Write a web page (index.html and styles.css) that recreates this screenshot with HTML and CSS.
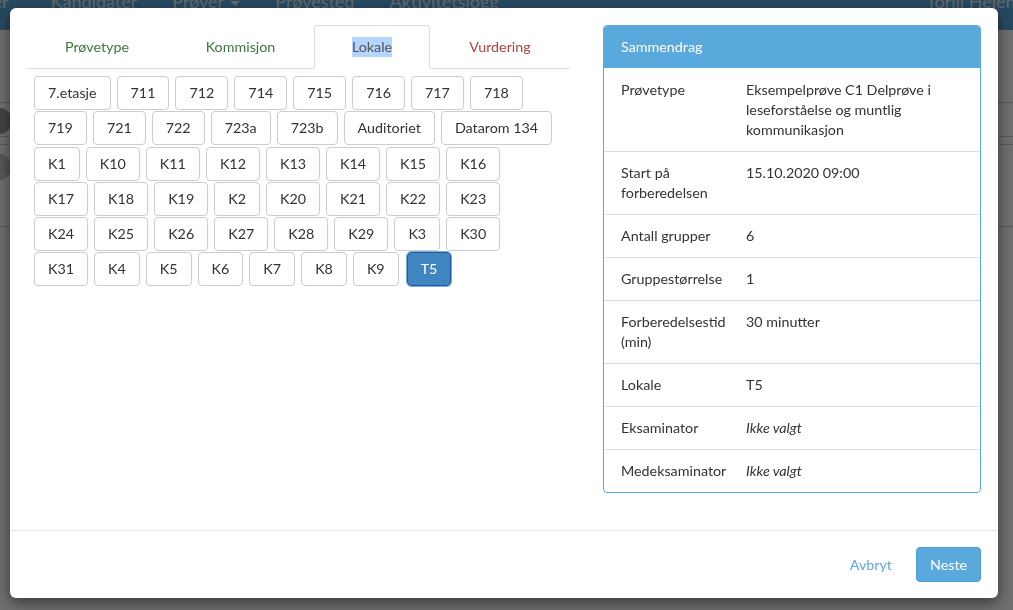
FILE: index.html
```html
<!DOCTYPE html>
<html lang="no">
<head>
<meta charset="utf-8">
<title>Ny prøve</title>
<link rel="stylesheet" href="styles.css">
</head>
<body>
<div class="page">
  <nav class="topnav">
    <span class="brand">Prøvesystemer</span>
    <span class="nav-item">Kandidater</span>
    <span class="nav-item">Prøver <span class="caret"></span></span>
    <span class="nav-item">Prøvested</span>
    <span class="nav-item">Aktivitetslogg</span>
    <span class="nav-user">Torill Helene</span>
  </nav>
  <div class="toolbar"><span class="avatar"></span></div>
  <div class="band band-a"></div>
  <div class="band band-b"><span class="badge">0</span></div>
  <div class="band band-c"></div>
</div>

<div class="backdrop"></div>

<div class="modal">
  <div class="modal-body">
    <div class="left-col">
      <div class="tabs">
        <div class="tab tab-done">Prøvetype</div>
        <div class="tab tab-done">Kommisjon</div>
        <div class="tab tab-active"><span class="selected-text">Lokale</span></div>
        <div class="tab tab-error">Vurdering</div>
      </div>
      <div class="rooms">
        <div class="room-row">
          <button class="room">7.etasje</button><button class="room">711</button><button class="room">712</button><button class="room">714</button><button class="room">715</button><button class="room">716</button><button class="room">717</button><button class="room">718</button>
        </div>
        <div class="room-row">
          <button class="room">719</button><button class="room">721</button><button class="room">722</button><button class="room">723a</button><button class="room">723b</button><button class="room">Auditoriet</button><button class="room">Datarom 134</button>
        </div>
        <div class="room-row">
          <button class="room">K1</button><button class="room">K10</button><button class="room">K11</button><button class="room">K12</button><button class="room">K13</button><button class="room">K14</button><button class="room">K15</button><button class="room">K16</button>
        </div>
        <div class="room-row">
          <button class="room">K17</button><button class="room">K18</button><button class="room">K19</button><button class="room">K2</button><button class="room">K20</button><button class="room">K21</button><button class="room">K22</button><button class="room">K23</button>
        </div>
        <div class="room-row">
          <button class="room">K24</button><button class="room">K25</button><button class="room">K26</button><button class="room">K27</button><button class="room">K28</button><button class="room">K29</button><button class="room">K3</button><button class="room">K30</button>
        </div>
        <div class="room-row">
          <button class="room">K31</button><button class="room">K4</button><button class="room">K5</button><button class="room">K6</button><button class="room">K7</button><button class="room">K8</button><button class="room">K9</button><button class="room room-selected">T5</button>
        </div>
      </div>
    </div>

    <div class="summary">
      <div class="summary-head">Sammendrag</div>
      <div class="summary-row first"><div class="label">Prøvetype</div><div class="value">Eksempelprøve C1 Delprøve i leseforståelse og muntlig kommunikasjon</div></div>
      <div class="summary-row"><div class="label">Start på forberedelsen</div><div class="value">15.10.2020 09:00</div></div>
      <div class="summary-row"><div class="label">Antall grupper</div><div class="value">6</div></div>
      <div class="summary-row"><div class="label">Gruppestørrelse</div><div class="value">1</div></div>
      <div class="summary-row"><div class="label">Forberedelsestid (min)</div><div class="value">30 minutter</div></div>
      <div class="summary-row"><div class="label">Lokale</div><div class="value">T5</div></div>
      <div class="summary-row"><div class="label">Eksaminator</div><div class="value empty">Ikke valgt</div></div>
      <div class="summary-row"><div class="label">Medeksaminator</div><div class="value empty">Ikke valgt</div></div>
    </div>
  </div>
  <div class="modal-footer">
    <button class="btn-link">Avbryt</button>
    <button class="btn-primary">Neste</button>
  </div>
</div>
</body>
</html>
```

FILE: styles.css
```css
* { box-sizing: border-box; }
html, body {
  margin: 0;
  padding: 0;
  width: 1013px;
  height: 610px;
  overflow: hidden;
}
body {
  font-family: Lato, "Open Sans", "Liberation Sans", sans-serif;
  font-size: 14.3px;
  line-height: 20px;
  color: #333;
  background: #fff;
}

/* Page behind the dialog */
.page { width: 1013px; height: 610px; }
.topnav {
  height: 30px;
  background: #5aa9dc;
  display: flex;
  align-items: flex-start;
  overflow: hidden;
  font-size: 18px;
  line-height: 24px;
  color: #e4eef6;
}
.topnav > span { margin-top: -11px; white-space: nowrap; }
.brand { margin-left: -108px; margin-right: 42px; }
.nav-item { margin-right: 35px; }
.caret {
  display: inline-block;
  width: 0; height: 0;
  border-left: 5px solid transparent;
  border-right: 5px solid transparent;
  border-top: 5px solid #e4eef6;
  vertical-align: middle;
  margin-left: 2px;
}
.nav-user { margin-left: auto; margin-right: -12px; }
.toolbar {
  height: 73px;
  border-bottom: 1px solid #cfcfcf;
  position: relative;
}
.avatar {
  position: absolute;
  left: -14px; top: 78px;
  width: 26px; height: 26px;
  border-radius: 50%;
  background: #999;
}
.band { border-bottom: 1px solid #cfcfcf; position: relative; }
.band-a { height: 34px; }
.band-b { height: 8px; }
.band-c { height: 82px; }
.badge {
  position: absolute;
  left: -14px; top: 17px;
  width: 26px; height: 26px;
  border-radius: 50%;
  background: #c8c8c8;
  color: #aaa;
  font-size: 13px;
  text-align: right;
  line-height: 26px;
}

.backdrop {
  position: fixed;
  inset: 0;
  background: rgba(0, 0, 0, 0.56);
}

/* Dialog */
.modal {
  position: absolute;
  left: 10px;
  top: 8px;
  width: 988px;
  height: 590px;
  background: #fff;
  border-radius: 6px;
  box-shadow: 0 5px 15px rgba(0, 0, 0, 0.5);
  display: flex;
  flex-direction: column;
}
.modal-body {
  height: 522px;
  padding: 17px 17px 0 17px;
  display: flex;
  gap: 33px;
  align-items: flex-start;
}
.left-col { width: 543px; }

.tabs {
  display: grid;
  grid-template-columns: 140px 147px 116px 140px;
  border-bottom: 1px solid #ddd;
  height: 44px;
}
.tab {
  text-align: center;
  padding: 12px 0 10px;
  line-height: 20px;
  height: 44px;
}
.tab-done { color: #3c763d; }
.tab-error { color: #a94442; }
.tab-active {
  border: 1px solid #ddd;
  border-bottom-color: #fff;
  border-radius: 4px 4px 0 0;
  color: #555;
  background: #fff;
  padding-top: 11px;
}
.selected-text {
  background: #b4d5fe;
  display: inline-block;
  line-height: 20px;
}

.rooms {
  padding: 7px 0 0 7px;
  display: flex;
  flex-direction: column;
  gap: 1.3px;
}
.room-row { display: flex; gap: 6px; }
.room {
  font-family: Lato, "Open Sans", "Liberation Sans", sans-serif;
  font-size: 14.3px;
  line-height: 20px;
  color: #333;
  background: #fff;
  border: 1px solid #ccc;
  border-radius: 4px;
  padding: 6px 13px;
  height: 34px;
  margin: 0;
  white-space: nowrap;
}
.room-selected {
  background: #3f85bf;
  color: #fff;
  border-color: #1d58a8;
  outline: 1px solid #86aed3;
  outline-offset: 0;
  margin-left: 2px;
}

/* Summary panel */
.summary {
  width: 378px;
  border: 1px solid #5aa9dc;
  border-radius: 4px;
  overflow: hidden;
}
.summary-head {
  background: #5aa9dc;
  color: #fff;
  padding: 11px 17px 11px;
  height: 42px;
}
.summary-row {
  display: grid;
  grid-template-columns: 112px 1fr;
  column-gap: 13px;
  padding: 11px 17px;
  border-top: 1px solid #ddd;
}
.summary-row.first { border-top: 0; padding-top: 12px; }
.empty { font-style: italic; }

/* Footer */
.modal-footer {
  border-top: 1px solid #e5e5e5;
  padding: 16px 17px 16px;
  display: flex;
  justify-content: flex-end;
  align-items: center;
  gap: 11px;
}
.btn-link, .btn-primary {
  font-family: Lato, "Open Sans", "Liberation Sans", sans-serif;
  font-size: 14.3px;
  line-height: 20px;
  border-radius: 4px;
  margin: 0;
}
.btn-link {
  background: none;
  border: 1px solid transparent;
  color: #5aa9dc;
  padding: 6px 12px;
}
.btn-primary {
  background: #5aa9dc;
  border: 1px solid #4d9fd6;
  color: #fff;
  padding: 7px 13px 6px;
  height: 35px;
  width: 65px;
}
```
